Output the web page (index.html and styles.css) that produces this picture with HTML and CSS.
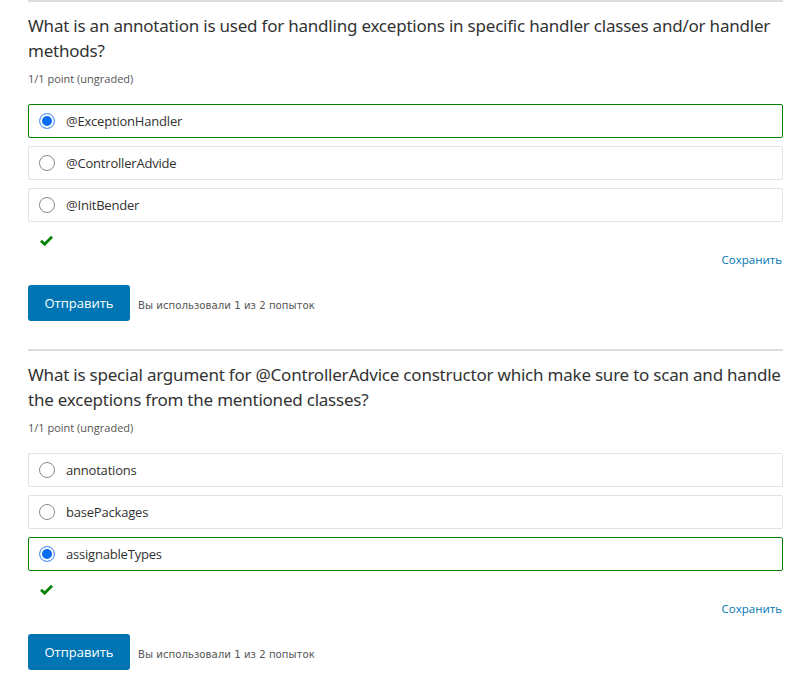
FILE: index.html
```html
<!DOCTYPE html>
<html>
<head>
<meta charset="utf-8">
<link rel="stylesheet" href="styles.css">
</head>
<body>
<div class="page">
  <section class="problem">
    <h3 class="question">What is an annotation is used for handling exceptions in specific handler classes and/or handler methods?</h3>
    <div class="points">1/1 point (ungraded)</div>
    <div class="options">
      <div class="option correct"><span class="radio checked"></span><span class="label">@ExceptionHandler</span></div>
      <div class="option"><span class="radio"></span><span class="label">@ControllerAdvide</span></div>
      <div class="option"><span class="radio"></span><span class="label">@InitBender</span></div>
    </div>
    <div class="status">
      <svg class="check" width="13" height="11" viewBox="0 0 13 11"><path d="M1 5.8 L4.6 9.2 L12 1.8" fill="none" stroke="#008100" stroke-width="2.8" stroke-linejoin="miter"/></svg>
    </div>
    <div class="save-row"><a class="save">Сохранить</a></div>
    <div class="actions">
      <button class="submit">Отправить</button>
      <span class="attempts">Вы использовали 1 из 2 попыток</span>
    </div>
  </section>
  <section class="problem">
    <h3 class="question">What is special argument for @ControllerAdvice constructor which make sure to scan and handle the exceptions from the mentioned classes?</h3>
    <div class="points">1/1 point (ungraded)</div>
    <div class="options">
      <div class="option"><span class="radio"></span><span class="label">annotations</span></div>
      <div class="option"><span class="radio"></span><span class="label">basePackages</span></div>
      <div class="option correct"><span class="radio checked"></span><span class="label">assignableTypes</span></div>
    </div>
    <div class="status">
      <svg class="check" width="13" height="11" viewBox="0 0 13 11"><path d="M1 5.8 L4.6 9.2 L12 1.8" fill="none" stroke="#008100" stroke-width="2.8" stroke-linejoin="miter"/></svg>
    </div>
    <div class="save-row"><a class="save">Сохранить</a></div>
    <div class="actions">
      <button class="submit">Отправить</button>
      <span class="attempts">Вы использовали 1 из 2 попыток</span>
    </div>
  </section>
</div>
</body>
</html>
```

FILE: styles.css
```css
html, body {
  margin: 0;
  padding: 0;
  background: #fff;
}
.page {
  padding: 0 11px 0 28px;
  font-family: "Open Sans", "Noto Sans", sans-serif;
  color: #313131;
}
.problem {
  border-top: 2px solid #dcdcdc;
  height: 347px;
}
.question {
  margin: 11px 0 0 0;
  font-family: "Noto Sans", sans-serif;
  font-weight: normal;
  font-size: 17px;
  letter-spacing: -0.22px;
  line-height: 25px;
  color: #333;
}
.points {
  margin-top: 9px;
  font-size: 11px;
  line-height: 14px;
  color: #555;
}
.options {
  margin-top: 18px;
  display: flex;
  flex-direction: column;
  gap: 8px;
}
.option {
  height: 32px;
  border: 1px solid #e2e2e2;
  border-radius: 2px;
  display: flex;
  align-items: center;
  padding-left: 10px;
}
.option.correct {
  border-color: #008100;
}
.radio {
  width: 16px;
  height: 16px;
  box-sizing: border-box;
  border: 1px solid #8a8a8a;
  border-radius: 50%;
  flex: none;
}
.radio.checked {
  border: 1px solid #5f9ef7;
  background: #0a6cf0;
  box-shadow: inset 0 0 0 2px #fff;
}
.label {
  margin-left: 11px;
  font-size: 13px;
  letter-spacing: -0.2px;
  color: #313131;
}
.status {
  height: 11px;
  padding-top: 13px;
  padding-left: 12px;
}
.check {
  display: block;
}
.save-row {
  margin-top: 6px;
  display: flex;
  justify-content: flex-end;
  height: 16px;
  line-height: 16px;
}
.save {
  font-size: 11.5px;
  color: #0075b4;
  margin-right: 1px;
}
.actions {
  margin-top: 17px;
  display: flex;
  align-items: center;
}
.submit {
  width: 102px;
  height: 36px;
  border: none;
  border-radius: 3px;
  background: #0075b4;
  color: #fff;
  font-family: "Open Sans", sans-serif;
  font-size: 13px;
  padding: 0;
}
.attempts {
  margin-left: 8px;
  margin-top: 5px;
  font-family: "DejaVu Sans", sans-serif;
  font-size: 10.2px;
  color: #555;
}
```
